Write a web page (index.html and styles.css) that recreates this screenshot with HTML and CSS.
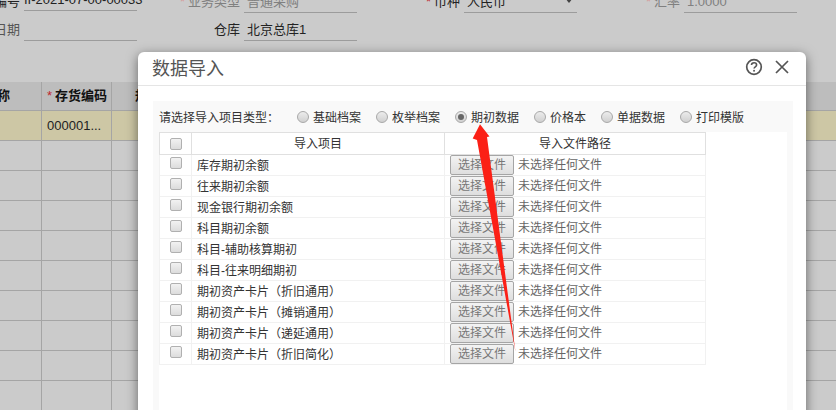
FILE: index.html
```html
<!DOCTYPE html>
<html lang="zh-CN">
<head>
<meta charset="utf-8">
<title>数据导入</title>
<link rel="stylesheet" href="styles.css">
</head>
<body>
<div class="page">
  <div class="form">
    <div class="f-row">
      <div class="field"><span class="f-label">编号</span><span class="f-val f-code">II-2021-07-00-00033</span></div>
      <div class="field"><span class="f-label dim"><i>*</i>业务类型</span><span class="f-val dim">普通采购</span></div>
      <div class="field"><span class="f-label"><i>*</i>币种</span><span class="f-val">人民币<b class="caret"></b></span></div>
      <div class="field"><span class="f-label dim"><i>*</i>汇率</span><span class="f-val dim">1.0000</span></div>
    </div>
    <div class="f-row">
      <div class="field"><span class="f-label muted">日期</span><span class="f-val"></span></div>
      <div class="field"><span class="f-label">仓库</span><span class="f-val">北京总库1</span></div>
    </div>
  </div>
  <div class="grid">
    <div class="g-row g-head"><div class="g-cut">称</div><div><i>*</i>存货编码</div><div class="g-next">规</div></div>
    <div class="g-row g-sel"><div></div><div>000001...</div><div></div></div>
    <div class="g-row"><div></div><div></div><div></div></div>
    <div class="g-row"><div></div><div></div><div></div></div>
    <div class="g-row"><div></div><div></div><div></div></div>
    <div class="g-row"><div></div><div></div><div></div></div>
    <div class="g-row"><div></div><div></div><div></div></div>
    <div class="g-row"><div></div><div></div><div></div></div>
    <div class="g-row"><div></div><div></div><div></div></div>
    <div class="g-row"><div></div><div></div><div></div></div>
    <div class="g-row"><div></div><div></div><div></div></div>
  </div>

  <section class="modal">
    <header class="m-head">
      <h2>数据导入</h2>
      <div class="m-tools">
        <svg class="ic" width="18" height="18" viewBox="0 0 18 18"><circle cx="9" cy="9" r="7.3" fill="none" stroke="#555" stroke-width="1.7"/><path d="M6.5 7.1c0-1.500 1.100-2.400 2.600-2.400s2.500.9 2.500 2.200c0 1.900-2.500 1.900-2.500 3.600" fill="none" stroke="#555" stroke-width="1.6"/><rect x="8.200" y="11.900" width="1.700" height="1.700" fill="#555"/></svg>
        <svg class="ic" width="14" height="14" viewBox="0 0 14 14"><path d="M1 1l12 12M13 1L1 13" fill="none" stroke="#555" stroke-width="1.7"/></svg>
      </div>
    </header>
    <div class="m-panel">
      <div class="types">
        <span class="t-label">请选择导入项目类型：</span>
        <div class="opts">
          <label class="opt o1"><span class="radio"></span>基础档案</label>
          <label class="opt o2"><span class="radio"></span>枚举档案</label>
          <label class="opt o3"><span class="radio on"></span>期初数据</label>
          <label class="opt o4"><span class="radio"></span>价格本</label>
          <label class="opt o5"><span class="radio"></span>单据数据</label>
          <label class="opt o6"><span class="radio"></span>打印模版</label>
        </div>
      </div>
      <div class="t-box">
        <div class="t-row t-head"><div class="c1"><span class="cb"></span></div><div class="c2">导入项目</div><div class="c3">导入文件路径</div></div>
        <div class="t-row"><div class="c1"><span class="cb"></span></div><div class="c2">库存期初余额</div><div class="c3"><span class="btn">选择文件</span><span class="none">未选择任何文件</span></div></div>
        <div class="t-row"><div class="c1"><span class="cb"></span></div><div class="c2">往来期初余额</div><div class="c3"><span class="btn">选择文件</span><span class="none">未选择任何文件</span></div></div>
        <div class="t-row"><div class="c1"><span class="cb"></span></div><div class="c2">现金银行期初余额</div><div class="c3"><span class="btn">选择文件</span><span class="none">未选择任何文件</span></div></div>
        <div class="t-row"><div class="c1"><span class="cb"></span></div><div class="c2">科目期初余额</div><div class="c3"><span class="btn">选择文件</span><span class="none">未选择任何文件</span></div></div>
        <div class="t-row"><div class="c1"><span class="cb"></span></div><div class="c2">科目-辅助核算期初</div><div class="c3"><span class="btn">选择文件</span><span class="none">未选择任何文件</span></div></div>
        <div class="t-row"><div class="c1"><span class="cb"></span></div><div class="c2">科目-往来明细期初</div><div class="c3"><span class="btn">选择文件</span><span class="none">未选择任何文件</span></div></div>
        <div class="t-row"><div class="c1"><span class="cb"></span></div><div class="c2">期初资产卡片（折旧通用）</div><div class="c3"><span class="btn">选择文件</span><span class="none">未选择任何文件</span></div></div>
        <div class="t-row"><div class="c1"><span class="cb"></span></div><div class="c2">期初资产卡片（摊销通用）</div><div class="c3"><span class="btn">选择文件</span><span class="none">未选择任何文件</span></div></div>
        <div class="t-row"><div class="c1"><span class="cb"></span></div><div class="c2">期初资产卡片（递延通用）</div><div class="c3"><span class="btn">选择文件</span><span class="none">未选择任何文件</span></div></div>
        <div class="t-row"><div class="c1"><span class="cb"></span></div><div class="c2">期初资产卡片（折旧简化）</div><div class="c3"><span class="btn">选择文件</span><span class="none">未选择任何文件</span></div></div>
      </div>
    </div>
  </section>

  <svg class="arrow" width="836" height="410" viewBox="0 0 836 410"><path d="M480 124.300L489.500 136.500L487 137L515.500 352L477 140L472.700 138.500Z" fill="#fb2016"/></svg>
</div>
</body>
</html>
```
FILE: styles.css
```css
* { box-sizing: border-box; }
html, body { margin: 0; padding: 0; }
body {
  width: 836px; height: 410px; overflow: hidden; background: #cbcbcb;
  font-family: "Liberation Sans", "Noto Sans CJK SC", sans-serif;
  font-size: 12px; color: #222; text-spacing-trim: space-all;
}
.page { position: relative; width: 836px; height: 410px; overflow: hidden; }
i { font-style: normal; font-weight: 400; color: #c0262d; padding-right: 3px; }

.form { height: 97px; margin-top: -15px; }
.f-row { display: flex; height: 28px; }
.field { width: 220px; flex: none; display: flex; height: 28px; font-size: 13px; }
.f-label { width: 24px; flex: none; display: flex; justify-content: flex-end; padding: 6px 4px 0 0; line-height: 22px; white-space: nowrap; }
.f-val { width: 113px; padding: 6px 0 0 3px; line-height: 22px; border-bottom: 1px solid #9c9c9c; white-space: nowrap; position: relative; }
.f-code { height: 26px; padding: 4px 0 0; }
.dim { color: #808080; }
.dim i { color: #d79a9a; }
.muted { color: #555; }
.caret { position: absolute; right: 4px; top: 13px; border: 4px solid transparent; border-top: 5px solid #444; }

.grid { width: 836px; }
.g-row { display: grid; grid-template-columns: 42px 70px 1fr; height: 30px; border-bottom: 1px solid #a5a5a5; line-height: 29px; font-size: 13px; }
.g-row > div { border-right: 1px solid #a5a5a5; padding-left: 5px; white-space: nowrap; overflow: hidden; }
.g-row > div:last-child { border-right: 0; }
.g-head { height: 29px; background: #bdbdbd; font-weight: 700; line-height: 28px; color: #111; }
.g-row > .g-cut { padding-left: 0; text-indent: -3px; }
.g-row > .g-next { padding-left: 23px; }
.g-sel { background: #cdc7a5; height: 30px; }

.modal {
  position: absolute; left: 138px; top: 52px; width: 668px; height: 420px;
  background: #fff; border-radius: 6px 6px 0 0; box-shadow: 0 3px 12px rgba(0,0,0,.5);
}
.m-head { height: 34px; border-bottom: 1px solid #e5e5e5; display: flex; align-items: center; justify-content: space-between; padding: 0 17px 3px 14px; }
.m-head h2 { margin: 3px 0 0; font-size: 18px; font-weight: 400; color: #555; line-height: 32px; }
.m-tools { display: flex; align-items: center; gap: 12px; }
.ic { display: block; }
.m-panel { margin: 15px 13px 0 15px; background: #f9f9f9; padding: 0 6px; height: 370px; }
.types { display: flex; height: 31px; align-items: center; color: #333; }
.t-label { width: 138px; flex: none; }
.opts { display: flex; }
.opt { display: flex; align-items: center; gap: 4px; color: #333; white-space: nowrap; }
.o1, .o2, .o3, .o5 { width: 79px; }
.o4 { width: 67px; }
.radio { width: 12px; height: 12px; border-radius: 50%; border: 1px solid #a8a8a8; background: linear-gradient(#ececec, #d0d0d0); position: relative; flex: none; }
.radio.on::after { content: ""; position: absolute; left: 2px; top: 2px; width: 6px; height: 6px; border-radius: 50%; background: #666; }
.t-box { background: #fff; height: 300px; }
.t-row { display: grid; grid-template-columns: 33px 253px 261px; width: 547px; height: 21px; border-bottom: 1px solid #f1f1f1; line-height: 20px; color: #333; }
.t-row > div { border-right: 1px solid #f1f1f1; height: 20px; white-space: nowrap; }
.t-row > .c1 { border-left: 1px solid #f1f1f1; display: flex; justify-content: center; }
.t-row > .c2 { padding-left: 5px; line-height: 23px; }
.t-row > .c3 { padding-left: 5px; display: flex; }
.t-head { height: 23px; border-top: 1px solid #e0e0e0; border-bottom: 1px solid #e0e0e0; }
.t-head > div { border-right-color: #e0e0e0; height: 21px; }
.t-head > .c1 { border-left-color: #e0e0e0; align-items: center; }
.t-row.t-head > .c2, .t-row.t-head > .c3 { display: block; text-align: center; padding-left: 0; line-height: 22px; }
.cb { width: 12px; height: 12px; border: 1px solid #b0b0b0; border-radius: 2px; background: linear-gradient(#f2f2f2, #dcdcdc); margin-top: 2px; display: block; }
.t-head .cb { margin-top: 0; }
.btn { width: 64px; height: 20px; border: 1px solid #a5a5a5; border-radius: 2px; background: linear-gradient(#f3f3f3, #dedede); color: #777; text-align: center; line-height: 19px; flex: none; }
.none { margin-left: 4px; color: #666; line-height: 20px; }
.arrow { position: absolute; left: 0; top: 0; pointer-events: none; }
```
